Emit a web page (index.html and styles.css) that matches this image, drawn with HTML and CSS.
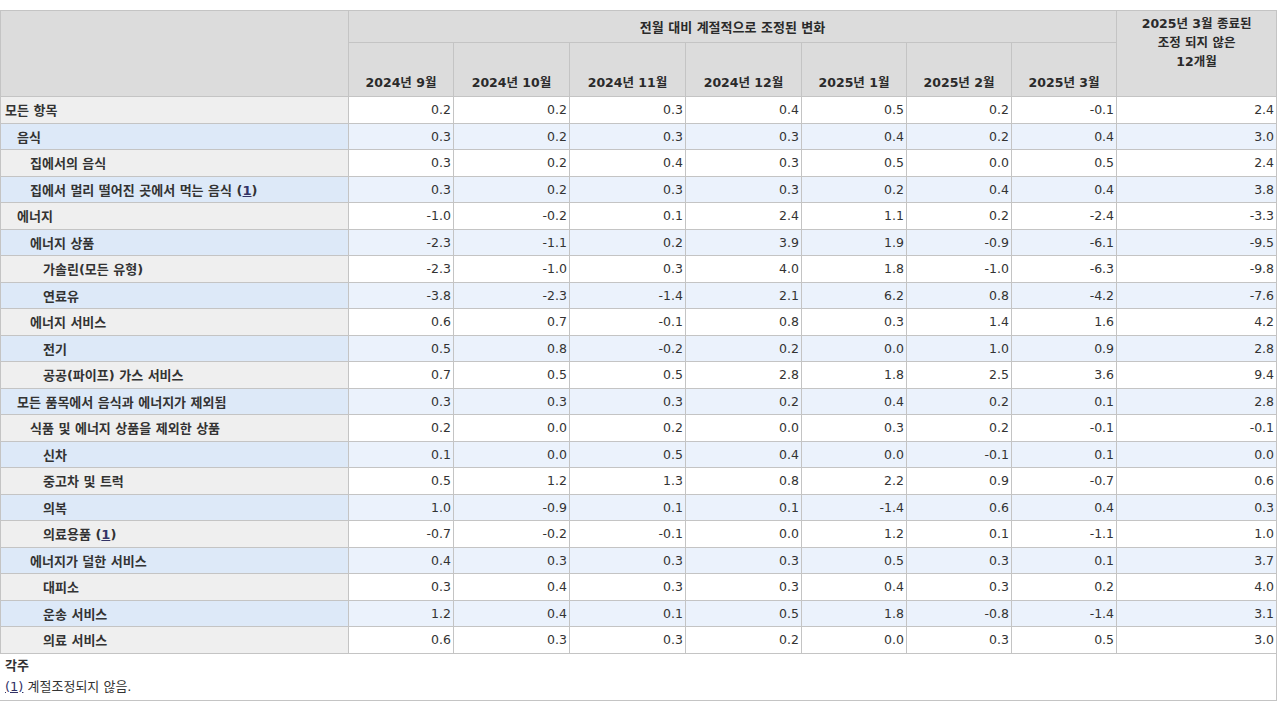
FILE: index.html
```html
<!DOCTYPE html>
<html lang="ko">
<head>
<meta charset="utf-8">
<title>CPI</title>
<link rel="stylesheet" href="styles.css">
</head>
<body>
<table class="cpi">
  <colgroup>
    <col class="c-label">
    <col class="c-a"><col class="c-b"><col class="c-b"><col class="c-b">
    <col class="c-a"><col class="c-a"><col class="c-a">
    <col class="c-last">
  </colgroup>
  <thead>
    <tr class="h1">
      <th rowspan="2" class="corner"></th>
      <th colspan="7" class="group">전월 대비 계절적으로 조정된 변화</th>
      <th rowspan="2" class="annual">2025년 3월 종료된<br>조정 되지 않은<br>12개월</th>
    </tr>
    <tr class="h2">
      <th>2024년 9월</th>
      <th>2024년 10월</th>
      <th>2024년 11월</th>
      <th>2024년 12월</th>
      <th>2025년 1월</th>
      <th>2025년 2월</th>
      <th>2025년 3월</th>
    </tr>
  </thead>
  <tbody>
    <tr class="odd"><th class="l0">모든 항목</th><td>0.2</td><td>0.2</td><td>0.3</td><td>0.4</td><td>0.5</td><td>0.2</td><td>-0.1</td><td>2.4</td></tr>
    <tr class="even"><th class="l1">음식</th><td>0.3</td><td>0.2</td><td>0.3</td><td>0.3</td><td>0.4</td><td>0.2</td><td>0.4</td><td>3.0</td></tr>
    <tr class="odd"><th class="l2">집에서의 음식</th><td>0.3</td><td>0.2</td><td>0.4</td><td>0.3</td><td>0.5</td><td>0.0</td><td>0.5</td><td>2.4</td></tr>
    <tr class="even"><th class="l2">집에서 멀리 떨어진 곳에서 먹는 음식 <span class="fnref">(<span class="fn">1</span>)</span></th><td>0.3</td><td>0.2</td><td>0.3</td><td>0.3</td><td>0.2</td><td>0.4</td><td>0.4</td><td>3.8</td></tr>
    <tr class="odd"><th class="l1">에너지</th><td>-1.0</td><td>-0.2</td><td>0.1</td><td>2.4</td><td>1.1</td><td>0.2</td><td>-2.4</td><td>-3.3</td></tr>
    <tr class="even"><th class="l2">에너지 상품</th><td>-2.3</td><td>-1.1</td><td>0.2</td><td>3.9</td><td>1.9</td><td>-0.9</td><td>-6.1</td><td>-9.5</td></tr>
    <tr class="odd"><th class="l3">가솔린(모든 유형)</th><td>-2.3</td><td>-1.0</td><td>0.3</td><td>4.0</td><td>1.8</td><td>-1.0</td><td>-6.3</td><td>-9.8</td></tr>
    <tr class="even"><th class="l3">연료유</th><td>-3.8</td><td>-2.3</td><td>-1.4</td><td>2.1</td><td>6.2</td><td>0.8</td><td>-4.2</td><td>-7.6</td></tr>
    <tr class="odd"><th class="l2">에너지 서비스</th><td>0.6</td><td>0.7</td><td>-0.1</td><td>0.8</td><td>0.3</td><td>1.4</td><td>1.6</td><td>4.2</td></tr>
    <tr class="even"><th class="l3">전기</th><td>0.5</td><td>0.8</td><td>-0.2</td><td>0.2</td><td>0.0</td><td>1.0</td><td>0.9</td><td>2.8</td></tr>
    <tr class="odd"><th class="l3">공공(파이프) 가스 서비스</th><td>0.7</td><td>0.5</td><td>0.5</td><td>2.8</td><td>1.8</td><td>2.5</td><td>3.6</td><td>9.4</td></tr>
    <tr class="even"><th class="l1">모든 품목에서 음식과 에너지가 제외됨</th><td>0.3</td><td>0.3</td><td>0.3</td><td>0.2</td><td>0.4</td><td>0.2</td><td>0.1</td><td>2.8</td></tr>
    <tr class="odd"><th class="l2">식품 및 에너지 상품을 제외한 상품</th><td>0.2</td><td>0.0</td><td>0.2</td><td>0.0</td><td>0.3</td><td>0.2</td><td>-0.1</td><td>-0.1</td></tr>
    <tr class="even"><th class="l3">신차</th><td>0.1</td><td>0.0</td><td>0.5</td><td>0.4</td><td>0.0</td><td>-0.1</td><td>0.1</td><td>0.0</td></tr>
    <tr class="odd"><th class="l3">중고차 및 트럭</th><td>0.5</td><td>1.2</td><td>1.3</td><td>0.8</td><td>2.2</td><td>0.9</td><td>-0.7</td><td>0.6</td></tr>
    <tr class="even"><th class="l3">의복</th><td>1.0</td><td>-0.9</td><td>0.1</td><td>0.1</td><td>-1.4</td><td>0.6</td><td>0.4</td><td>0.3</td></tr>
    <tr class="odd"><th class="l3">의료용품 <span class="fnref">(<span class="fn">1</span>)</span></th><td>-0.7</td><td>-0.2</td><td>-0.1</td><td>0.0</td><td>1.2</td><td>0.1</td><td>-1.1</td><td>1.0</td></tr>
    <tr class="even"><th class="l2">에너지가 덜한 서비스</th><td>0.4</td><td>0.3</td><td>0.3</td><td>0.3</td><td>0.5</td><td>0.3</td><td>0.1</td><td>3.7</td></tr>
    <tr class="odd"><th class="l3">대피소</th><td>0.3</td><td>0.4</td><td>0.3</td><td>0.3</td><td>0.4</td><td>0.3</td><td>0.2</td><td>4.0</td></tr>
    <tr class="even"><th class="l3">운송 서비스</th><td>1.2</td><td>0.4</td><td>0.1</td><td>0.5</td><td>1.8</td><td>-0.8</td><td>-1.4</td><td>3.1</td></tr>
    <tr class="odd"><th class="l3">의료 서비스</th><td>0.6</td><td>0.3</td><td>0.3</td><td>0.2</td><td>0.0</td><td>0.3</td><td>0.5</td><td>3.0</td></tr>
  </tbody>
  <tfoot>
    <tr>
      <td colspan="9" class="notes">
        <div class="notes-title">각주</div>
        <div class="note"><span class="fn">(1)</span> 계절조정되지 않음.</div>
      </td>
    </tr>
  </tfoot>
</table>
</body>
</html>
```

FILE: styles.css
```css
html, body {
  margin: 0;
  padding: 0;
  background: #ffffff;
}

body {
  padding-top: 10px;
  font-family: "DejaVu Sans", "Noto Sans CJK KR", sans-serif;
  color: #333333;
}

.cpi {
  border-collapse: collapse;
  table-layout: fixed;
  width: 1277px;
  font-size: 12px;
}

.c-label { width: 348px; }
.c-a { width: 105px; }
.c-b { width: 116px; }
.c-last { width: 160px; }

.cpi th,
.cpi td {
  border: 1px solid #c4c4c4;
  padding: 0 3px;
}

.cpi thead th {
  background: #dcdcdc;
  font-weight: bold;
  color: #2a2a2a;
  font-size: 12.5px;
}

.h1 th {
  height: 31px;
}

.h1 .group {
  text-align: center;
  vertical-align: middle;
  font-size: 13px;
}

.h1 .annual {
  vertical-align: top;
  text-align: center;
  line-height: 19px;
  padding-top: 3px;
}

.h2 th {
  height: 48px;
  vertical-align: bottom;
  padding-bottom: 5px;
  text-align: center;
}

.cpi tbody th {
  text-align: left;
  font-weight: bold;
  color: #333333;
  white-space: nowrap;
  font-size: 13px;
}

.cpi tbody tr {
  height: 26.5px;
}

.cpi tbody td {
  text-align: right;
  padding-right: 2px;
  font-size: 12.5px;
}

.odd th { background: #efefef; }
.odd td { background: #ffffff; }
.even th { background: #dde9f8; }
.even td { background: #ebf2fc; }

.l0 { padding-left: 4px !important; }
.l1 { padding-left: 16px !important; }
.l2 { padding-left: 29px !important; }
.l3 { padding-left: 42px !important; }

.fnref {
  font-weight: bold;
}

.fn {
  text-decoration: underline;
  color: #333366;
}

.notes {
  text-align: left;
  padding: 1px 4px 3px !important;
  background: #ffffff;
  border-left-color: #ffffff !important;
  font-size: 13px;
  line-height: 21px;
}

.notes-title {
  font-weight: bold;
}
```
